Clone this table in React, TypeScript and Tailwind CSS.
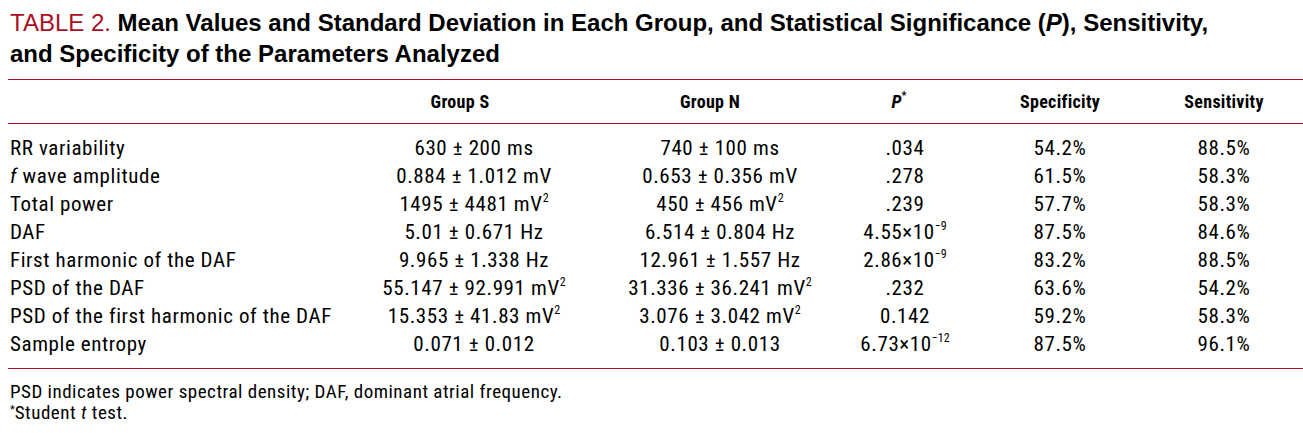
import React from "react";

type Row = { label: React.ReactNode; s: React.ReactNode; n: React.ReactNode; p: React.ReactNode; spec: string; sens: string };

const Sup = ({ children }: { children: React.ReactNode }) => (
  <sup className="text-[12px] tracking-normal relative top-[-1px] align-super leading-none">{children}</sup>
);

const Star = () => (
  <span className="inline-block align-top text-[11px] leading-none tracking-normal relative top-[2px]">*</span>
);

const rows: Row[] = [
  { label: "RR variability", s: "630 ± 200 ms", n: "740 ± 100 ms", p: ".034", spec: "54.2%", sens: "88.5%" },
  { label: <><i>f</i> wave amplitude</>, s: "0.884 ± 1.012 mV", n: "0.653 ± 0.356 mV", p: ".278", spec: "61.5%", sens: "58.3%" },
  { label: "Total power", s: <>1495 ± 4481 mV<Sup>2</Sup></>, n: <>450 ± 456 mV<Sup>2</Sup></>, p: ".239", spec: "57.7%", sens: "58.3%" },
  { label: "DAF", s: "5.01 ± 0.671 Hz", n: "6.514 ± 0.804 Hz", p: <>4.55×10<Sup>−9</Sup></>, spec: "87.5%", sens: "84.6%" },
  { label: "First harmonic of the DAF", s: "9.965 ± 1.338 Hz", n: "12.961 ± 1.557 Hz", p: <>2.86×10<Sup>−9</Sup></>, spec: "83.2%", sens: "88.5%" },
  { label: "PSD of the DAF", s: <>55.147 ± 92.991 mV<Sup>2</Sup></>, n: <>31.336 ± 36.241 mV<Sup>2</Sup></>, p: ".232", spec: "63.6%", sens: "54.2%" },
  { label: "PSD of the first harmonic of the DAF", s: <>15.353 ± 41.83 mV<Sup>2</Sup></>, n: <>3.076 ± 3.042 mV<Sup>2</Sup></>, p: "0.142", spec: "59.2%", sens: "58.3%" },
  { label: "Sample entropy", s: "0.071 ± 0.012", n: "0.103 ± 0.013", p: <>6.73×10<Sup>−12</Sup></>, spec: "87.5%", sens: "96.1%" },
];

const grid = "grid grid-cols-[335px_262px_230px_140px_170px_158px]";

export default function App() {
  return (
    <div className="w-[1303px] h-[433px] bg-white text-black overflow-hidden">
      <div className="pl-[10px] pt-[7px] font-['Liberation_Sans',Arial,sans-serif] text-[24px] leading-[31px] font-bold">
        <span className="text-[#ac0e1f] font-normal">TABLE 2.</span> Mean Values and Standard Deviation in Each Group, and Statistical Significance (<i>P</i>), Sensitivity,
        <br />
        and Specificity of the Parameters Analyzed
      </div>
      <div className="ml-[8px] mt-[10px] font-['Roboto',sans-serif] [font-stretch:75%]">
        <div className={`${grid} h-[45px] items-center border-t border-b border-[#ac0e1f] text-[18px] font-bold tracking-[0.3px]`}>
          <div />
          <div className="text-center pr-[28px]">Group S</div>
          <div className="text-center pr-[20px]">Group N</div>
          <div className="text-center pr-[12px]"><i>P</i><Star /></div>
          <div className="text-center">Specificity</div>
          <div className="text-center">Sensitivity</div>
        </div>
        <div className="pt-[10px] pb-[10px] border-b border-[#ac0e1f] text-[21px] leading-[28px] tracking-[0.6px]">
          {rows.map((r, i) => (
            <div key={i} className={`${grid} h-[28px]`}>
              <div className="pl-[2px] whitespace-nowrap">{r.label}</div>
              <div className="text-center whitespace-nowrap">{r.s}</div>
              <div className="text-center whitespace-nowrap">{r.n}</div>
              <div className="text-center whitespace-nowrap">{r.p}</div>
              <div className="text-center">{r.spec}</div>
              <div className="text-center">{r.sens}</div>
            </div>
          ))}
        </div>
        <div className="pl-[2px] pt-[12px] text-[19px] leading-[21px] tracking-[0.5px]">
          <div>PSD indicates power spectral density; DAF, dominant atrial frequency.</div>
          <div><Star />Student <i>t</i> test.</div>
        </div>
      </div>
    </div>
  );
}
